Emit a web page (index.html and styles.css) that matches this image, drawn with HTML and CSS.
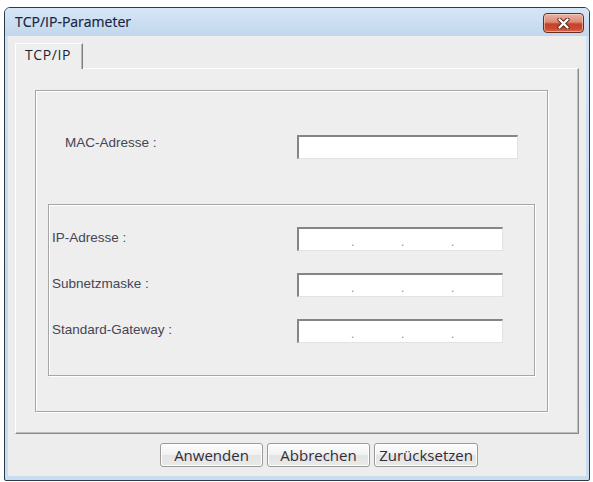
FILE: index.html
```html
<!DOCTYPE html>
<html lang="de">
<head>
<meta charset="utf-8">
<title>TCP/IP-Parameter</title>
<link rel="stylesheet" href="styles.css">
</head>
<body>
<div class="window">
  <div class="titlebar">
    <span class="title">TCP/IP-Parameter</span>
    <button class="close" aria-label="Schließen">
      <svg width="13" height="11" viewBox="0 0 13 11">
        <path d="M2.5 1.5 L10.5 9.5 M10.5 1.5 L2.5 9.5" stroke="#5a2418" stroke-width="4.2" stroke-linecap="round" fill="none"/>
        <path d="M2.5 1.5 L10.5 9.5 M10.5 1.5 L2.5 9.5" stroke="#ffffff" stroke-width="2.4" stroke-linecap="round" fill="none"/>
      </svg>
    </button>
  </div>
  <div class="client">
    <div class="tabs"><div class="tab">TCP/IP</div></div>
    <div class="panel">
      <div class="group outer">
        <div class="row mac-row">
          <span class="label">MAC-Adresse :</span>
          <div class="field mac-field"></div>
        </div>
        <div class="group inner">
          <div class="row ip-row">
            <span class="label">IP-Adresse :</span>
            <div class="field ip-field"><span class="dot">.</span><span class="dot">.</span><span class="dot">.</span></div>
          </div>
          <div class="row ip-row">
            <span class="label">Subnetzmaske :</span>
            <div class="field ip-field"><span class="dot">.</span><span class="dot">.</span><span class="dot">.</span></div>
          </div>
          <div class="row ip-row">
            <span class="label">Standard-Gateway :</span>
            <div class="field ip-field"><span class="dot">.</span><span class="dot">.</span><span class="dot">.</span></div>
          </div>
        </div>
      </div>
    </div>
    <div class="buttons">
      <button class="btn">Anwenden</button>
      <button class="btn">Abbrechen</button>
      <button class="btn btn-wide">Zurücksetzen</button>
    </div>
  </div>
</div>
</body>
</html>
```
FILE: styles.css
```css
* { box-sizing: border-box; }

html, body {
  margin: 0;
  padding: 0;
  background: #ffffff;
}

.window {
  margin: 7px 0 0 4px;
  width: 586px;
  height: 474px;
  border: 1px solid #2c3b4c;
  border-radius: 6px 6px 2px 2px;
  background: linear-gradient(#d2e3f4, #c3d8ee 60%, #c9dcf0);
  display: flex;
  flex-direction: column;
  overflow: hidden;
}

.titlebar {
  height: 28px;
  flex: none;
  display: flex;
  align-items: flex-start;
  justify-content: space-between;
  padding: 0 5px 0 10px;
  background: linear-gradient(#d6e6f6, #c2d7ed);
}

.title {
  font-family: "Open Sans", "DejaVu Sans", sans-serif;
  font-size: 14px;
  line-height: 28px;
  color: #18233f;
  -webkit-text-stroke: 0.2px #18233f;
}

.close {
  margin-top: 5px;
  width: 41px;
  height: 20px;
  padding: 0;
  border: 1px solid #6a2c22;
  border-radius: 4px;
  background: linear-gradient(#eab3a6 0%, #dc8a78 45%, #c5432a 55%, #c94a30 80%, #d8674c 100%);
  box-shadow: inset 0 0 0 1px rgba(255, 220, 210, 0.55);
  display: flex;
  align-items: center;
  justify-content: center;
}

.close svg { display: block; }

.client {
  flex: 1;
  margin: 0 3px 4px 3px;
  background: #ededed;
  padding: 7px 0 0 7px;
  display: flex;
  flex-direction: column;
}

.tabs {
  display: flex;
  height: 25px;
  flex: none;
}

.tab {
  width: 68px;
  height: 26px;
  border-top: 1px solid #ffffff;
  border-left: 1px solid #ffffff;
  border-right: 1px solid #7d7d7d;
  box-shadow: inset -1px 0 0 #b9b9b9;
  background: #eeeeee;
  font-family: "Open Sans", "DejaVu Sans", sans-serif;
  font-size: 14px;
  letter-spacing: 0.6px;
  color: #1f1f35;
  padding-left: 9px;
  line-height: 22px;
  position: relative;
  z-index: 1;
}

.panel {
  width: 564px;
  height: 366px;
  flex: none;
  border-top: 1px solid #ffffff;
  border-left: 1px solid #ffffff;
  border-right: 1px solid #8a8a8a;
  border-bottom: 1px solid #8a8a8a;
  box-shadow: inset -1px -1px 0 #bdbdbd;
  background: #eeeeee;
  padding: 21px 0 0 19px;
}

.group {
  border: 1px solid #a6a6a6;
  box-shadow: inset 1px 1px 0 #ffffff, 1px 1px 0 #ffffff;
}

.outer {
  width: 513px;
  height: 322px;
}

.inner {
  margin: 45px 0 0 12px;
  width: 487px;
  height: 172px;
  padding-top: 22px;
  display: flex;
  flex-direction: column;
  gap: 22px;
}

.row {
  display: flex;
  align-items: center;
}

.label {
  font-family: "Liberation Sans", Arial, sans-serif;
  font-size: 13.5px;
  color: #454553;
}

.mac-row {
  margin-top: 44px;
  padding-left: 29px;
  align-items: flex-start;
}

.mac-row .label { width: 232px; }

.ip-row { padding-left: 3px; }

.ip-row .label {
  width: 245px;
  margin-bottom: 3px;
}

.field {
  height: 24px;
  background: #ffffff;
  border-top: 2px solid #858585;
  border-left: 2px solid #858585;
  border-right: 1px solid #e2e2e2;
  border-bottom: 1px solid #e2e2e2;
}

.mac-field { width: 221px; }

.ip-field {
  width: 206px;
  display: flex;
  align-items: flex-end;
  gap: 46px;
  padding-left: 52px;
  padding-bottom: 2px;
}

.dot {
  width: 4px;
  font-family: "Liberation Sans", Arial, sans-serif;
  font-size: 12px;
  line-height: 12px;
  color: #8c8c8c;
}

.buttons {
  margin-top: 9px;
  padding-left: 145px;
  display: flex;
  gap: 4px;
}

.btn {
  width: 103px;
  height: 24px;
  padding: 0;
  border: 1px solid #9a9a9a;
  border-radius: 3px;
  background: linear-gradient(#fdfdfd, #f1f1f1 50%, #e4e4e4 52%, #e9e9e9);
  box-shadow: inset 0 0 0 1px #ffffff;
  font-family: "Open Sans", "DejaVu Sans", sans-serif;
  font-size: 15px;
  line-height: 20px;
  color: #2e2e3a;
}

.btn-wide { width: 104px; }
```
